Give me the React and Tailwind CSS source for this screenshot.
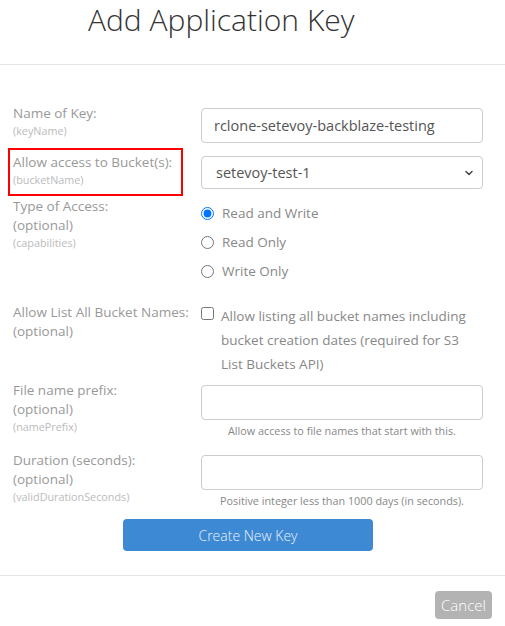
import { ChevronDown } from 'lucide-react'

const FONT = { fontFamily: '"Open Sans", "Liberation Sans", sans-serif' }

function Label({ title, sub, optional }) {
  return (
    <div className="w-[188px] shrink-0 pl-[13px] whitespace-nowrap">
      <div className="text-[13.5px] leading-[19px] text-[#999]">{title}</div>
      {optional && <div className="text-[13.5px] leading-[19px] text-[#999]">(optional)</div>}
      <div className="text-[10.8px] leading-[16px] text-[#bbb]">{sub}</div>
    </div>
  )
}

function TextBox({ value = '' }) {
  return (
    <input
      type="text"
      defaultValue={value}
      className="w-[282px] h-[35px] rounded-[4px] border border-[#ccc] px-[12px] text-[14.5px] text-[#555] outline-none"
    />
  )
}

export default function App() {
  return (
    <div className="w-[505px] h-[626px] bg-white overflow-hidden" style={FONT}>
      {/* Header */}
      <div className="h-[65px] border-b border-[#e5e5e5] pl-[88px]">
        <h1 className="text-[30px] font-light leading-[40px] text-[#333] whitespace-nowrap">Add Application Key</h1>
      </div>

      {/* Form */}
      <div className="pt-[39px]">
        <div className="flex">
          <Label title="Name of Key:" sub="(keyName)" />
          <div className="pt-[4px] pl-[13px]">
            <TextBox value="rclone-setevoy-backblaze-testing" />
          </div>
        </div>

        <div className="flex mt-[5px]">
          <div className="w-[188px] shrink-0 pl-[8px]">
            <div className="w-[175px] h-[48px] border-2 border-[#ff0000] pl-[3px] pt-[3px] whitespace-nowrap">
              <div className="text-[13.5px] leading-[19px] text-[#999]">Allow access to Bucket(s):</div>
              <div className="text-[10.8px] leading-[16px] text-[#bbb]">(bucketName)</div>
            </div>
          </div>
          <div className="pt-[8px] pl-[13px]">
            <div className="relative w-[282px] h-[33px]">
              <select className="appearance-none w-full h-full rounded-[4px] border border-[#ccc] pl-[14px] text-[14.5px] text-[#555] bg-white outline-none">
                <option>setevoy-test-1</option>
              </select>
              <ChevronDown size={12} strokeWidth={3} className="absolute right-[8px] top-[11px] text-[#444] pointer-events-none" />
            </div>
          </div>
        </div>

        <div className="flex mt-[1px]">
          <Label title="Type of Access:" sub="(capabilities)" optional />
          <div className="pl-[13px] pt-[7px] flex flex-col gap-[10px] text-[13.5px] text-[#888]">
            {['Read and Write', 'Read Only', 'Write Only'].map((t, i) => (
              <label key={t} className="flex items-center gap-[8px] h-[19px]">
                <input type="radio" name="cap" defaultChecked={i === 0} className="w-[13px] h-[13px] m-0" />
                <span>{t}</span>
              </label>
            ))}
          </div>
        </div>

        <div className="flex mt-[22px]">
          <Label title="Allow List All Bucket Names:" optional />
          <div className="pl-[13px] flex gap-[7px]">
            <input type="checkbox" className="w-[13px] h-[13px] mt-[4px] shrink-0 m-0" />
            <div className="w-[262px] text-[13.5px] leading-[24px] text-[#888] mt-[1px]">
              Allow listing all bucket names including bucket creation dates (required for S3 List Buckets API)
            </div>
          </div>
        </div>

        <div className="flex mt-[5px]">
          <Label title="File name prefix:" sub="(namePrefix)" optional />
          <div className="pl-[13px] pt-[4px]">
            <TextBox />
            <div className="text-center text-[10.8px] leading-[14px] mt-[4px] text-[#888] whitespace-nowrap">
              Allow access to file names that start with this.
            </div>
          </div>
        </div>

        <div className="flex mt-[13px]">
          <Label title="Duration (seconds):" sub="(validDurationSeconds)" optional />
          <div className="pl-[13px] pt-[4px]">
            <TextBox />
            <div className="text-center text-[10.8px] leading-[14px] mt-[4px] text-[#888] whitespace-nowrap">
              Positive integer less than 1000 days (in seconds).
            </div>
          </div>
        </div>

        <div className="pl-[123px] mt-[11px]">
          <button className="w-[250px] h-[32px] rounded-[4px] bg-[#3d89d3] text-[14px] font-light text-[#eaf2fb]">
            Create New Key
          </button>
        </div>
      </div>

      {/* Footer */}
      <div className="mt-[24px] border-t border-[#e5e5e5] flex justify-end pr-[13px] pt-[15px]">
        <button className="w-[57px] h-[28px] rounded-[4px] bg-[#b3b3b3] text-[15px] font-light text-white">
          Cancel
        </button>
      </div>
    </div>
  )
}
